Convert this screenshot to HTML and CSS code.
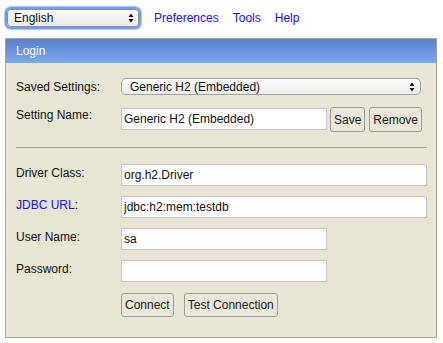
FILE: index.html
```html
<!DOCTYPE html>
<html lang="en">
<head>
  <meta charset="UTF-8" />
  <title>H2 Console</title>
  <link rel="stylesheet" href="styles.css">
</head>
<body>
  <header class="topbar">
    <div class="select-wrap lang">
      <select class="select lang-select">
        <option>English</option>
      </select>
      <svg class="arrows" width="6" height="10" viewBox="0 0 6 10"><path d="M3 0.5 L5.6 4 L0.4 4 Z M3 9.5 L5.6 6 L0.4 6 Z" fill="#111"/></svg>
    </div>
    <nav class="links">
      <a href="#">Preferences</a>
      <a href="#">Tools</a>
      <a href="#">Help</a>
    </nav>
  </header>

  <div class="login">
    <div class="login-head">Login</div>
    <form class="login-body">
      <div class="row row-saved">
        <label class="label">Saved Settings:</label>
        <div class="select-wrap saved">
          <select class="select saved-select">
            <option>Generic H2 (Embedded)</option>
          </select>
          <svg class="arrows" width="6" height="10" viewBox="0 0 6 10"><path d="M3 0.5 L5.6 4 L0.4 4 Z M3 9.5 L5.6 6 L0.4 6 Z" fill="#111"/></svg>
        </div>
      </div>

      <div class="row row-name">
        <label class="label">Setting Name:</label>
        <input class="field short" type="text" value="Generic H2 (Embedded)">
        <button type="button" class="btn btn-save">Save</button>
        <button type="button" class="btn btn-remove">Remove</button>
      </div>

      <hr class="sep">

      <div class="row">
        <label class="label">Driver Class:</label>
        <input class="field long" type="text" value="org.h2.Driver">
      </div>
      <div class="row">
        <label class="label"><a href="#">JDBC URL</a>:</label>
        <input class="field long" type="text" value="jdbc:h2:mem:testdb">
      </div>
      <div class="row">
        <label class="label">User Name:</label>
        <input class="field short" type="text" value="sa">
      </div>
      <div class="row">
        <label class="label">Password:</label>
        <input class="field short" type="password" value="">
      </div>

      <div class="row row-actions">
        <button type="button" class="btn btn-connect">Connect</button>
        <button type="button" class="btn btn-test">Test Connection</button>
      </div>
    </form>
  </div>
</body>
</html>
```

FILE: styles.css
```css
body {
  margin: 0;
  font-family: "Liberation Sans", Arial, sans-serif;
  font-size: 12px;
  color: #111;
  background-color: #fff;
}

a {
  color: #1a0dff;
  text-decoration: none;
}

/* top bar */

.topbar {
  display: flex;
  align-items: center;
  height: 38px;
  padding: 0 0 2px 7px;
  box-sizing: border-box;
}

.select-wrap {
  position: relative;
}

.select {
  appearance: none;
  -webkit-appearance: none;
  margin: 0;
  font-family: inherit;
  font-size: 12px;
  color: #111;
  border: 1px solid #a2a2a2;
  border-radius: 4px;
  background: linear-gradient(#fbfbfb, #ededed);
  box-sizing: border-box;
  outline: none;
}

.arrows {
  position: absolute;
  top: 50%;
  margin-top: -5px;
  pointer-events: none;
}

.lang-select {
  width: 132px;
  height: 18px;
  padding: 0 0 0 6px;
  border-color: #8a8fa0;
  box-shadow: 0 0 0 2px #6f9ef0, 0 0 1px 3px #a9c6f6;
}

.lang .arrows {
  right: 5px;
}

.links {
  display: flex;
  gap: 14px;
  margin-left: 15px;
}

/* login panel */

.login {
  margin-left: 5px;
  width: 432px;
  height: 300px;
  box-sizing: border-box;
  border: 1px solid #a6a493;
  background-color: #e8e5d4;
}

.login-head {
  height: 24px;
  line-height: 24px;
  padding-left: 10px;
  color: #fff;
  background: linear-gradient(#5a7fcb, #7aa8ef);
}

.login-body {
  padding: 15px 9px 0 10px;
}

.row {
  display: flex;
  align-items: flex-start;
  margin-top: 10px;
}

.label {
  width: 105px;
  flex-shrink: 0;
  line-height: 14px;
  padding-top: 2px;
}

.row-saved {
  margin-top: 0;
  align-items: center;
}

.row-saved .label {
  padding-top: 0;
}

.saved-select {
  width: 300px;
  height: 17px;
  padding: 0 0 0 8px;
  border-radius: 5px;
}

.saved .arrows {
  right: 6px;
}

.row-name {
  margin-top: 12px;
}

.row-name .label {
  padding-top: 1px;
}

.row-name .field {
  margin-top: 1px;
}

.field {
  height: 22px;
  margin: 0;
  padding: 0 2px;
  box-sizing: border-box;
  border: 1px solid #c9c9c9;
  background-color: #fff;
  font-family: inherit;
  font-size: 12px;
  color: #111;
  outline: none;
}

.field.short {
  width: 206px;
}

.field.long {
  width: 306px;
}

.sep {
  margin: 15px 0 16px;
  height: 0;
  border: 0;
  border-top: 1px solid #a4a398;
}

.btn {
  margin: 0;
  padding: 0 3px;
  height: 25px;
  box-sizing: border-box;
  border: 1px solid #9d9c94;
  border-radius: 3px;
  background-color: #eae7d8;
  font-family: inherit;
  font-size: 12px;
  color: #1a1a1a;
  white-space: nowrap;
}

.btn-save {
  margin-left: 3px;
}

.btn-remove {
  margin-left: 4px;
}

.row-actions {
  margin-top: 11px;
  padding-left: 105px;
}

.row-actions .btn {
  height: 24px;
}

.btn-test {
  margin-left: 10px;
}
```
